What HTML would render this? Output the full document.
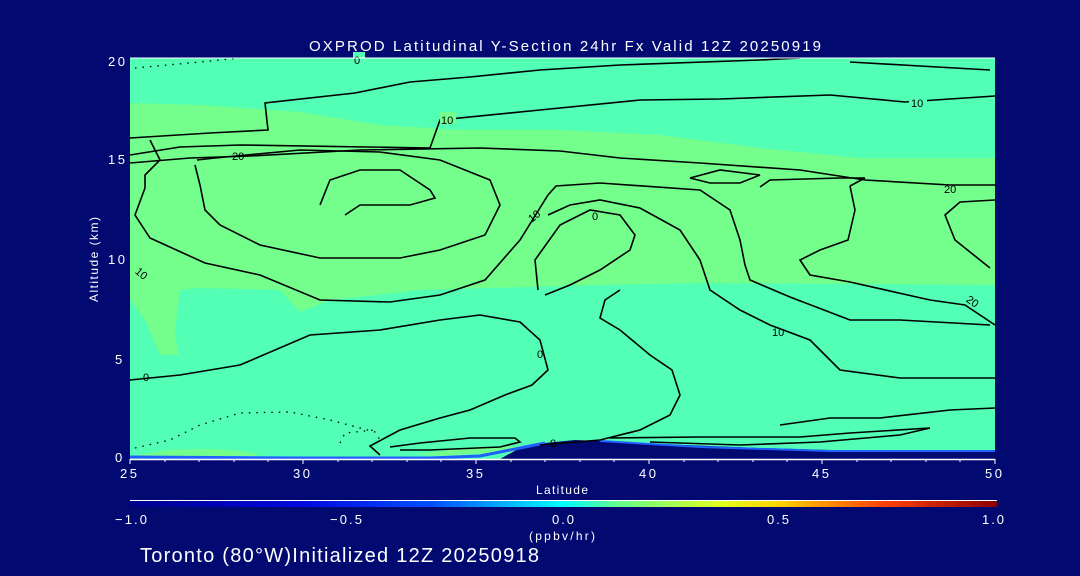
<!DOCTYPE html>
<html><head><style>
html,body{margin:0;padding:0;background:#020a72;width:1080px;height:576px;overflow:hidden}
svg{display:block}
text{font-family:"Liberation Sans",sans-serif;fill:#fff}
</style></head><body>
<svg width="1080" height="576" viewBox="0 0 1080 576">
<defs>
<linearGradient id="cb" x1="0" x2="1">
<stop offset="0" stop-color="#00008a"/>
<stop offset="0.2" stop-color="#0008e0"/>
<stop offset="0.35" stop-color="#0050ff"/>
<stop offset="0.5" stop-color="#00ffff"/>
<stop offset="0.56" stop-color="#60ff90"/>
<stop offset="0.68" stop-color="#e0ff20"/>
<stop offset="0.75" stop-color="#ffd000"/>
<stop offset="0.87" stop-color="#ff4000"/>
<stop offset="1" stop-color="#8a0000"/>
</linearGradient>
</defs>
<rect x="130" y="58" width="865" height="401" fill="#52ffb4"/>
<polygon fill="#74ff8c" points="130,103 200,105 300,112 380,125 460,130 560,130 660,135 760,148 860,158 995,158 995,285 700,283 600,285 420,290 330,300 300,312 280,290 200,288 180,290 175,330 178,355 160,355 145,320 130,300" />
<polygon fill="#74ff8c" points="130,456 170,450 210,449 250,452 260,456" />
<polygon fill="#74ff8c" points="415,454 470,448 520,446 515,452 440,456" />
<polygon fill="#020a72" points="500,459 520,448 545,443 575,440 600,441 660,444 760,448 830,450 900,450 995,450 995,459"/>
<polyline fill="none" stroke="#2060ff" stroke-width="3" points="130,457 300,458 430,458 480,456 520,448 545,443"/>
<polyline fill="none" stroke="#2060ff" stroke-width="2" points="600,441 700,447 830,451 995,451"/>
<g fill="none" stroke="#000" stroke-width="1.6">
<polyline points="130,138 210,133 268,130 265,103 355,93 410,82 470,77 540,70 620,65 760,60 800,58"/>
<polyline points="990,70 920,66 850,62"/>
<polyline points="130,155 180,147 240,145 430,148 440,120 540,110 640,100 720,99 830,95 905,102 995,96"/>
<polyline points="130,163 190,158 250,156 360,150 480,148 560,151 620,158 700,163 800,170 865,180 950,185 995,185"/>
<polyline points="150,140 160,160 145,175 145,188 135,215 150,238 205,263 260,275 320,300 390,302 440,295 485,280 520,240 548,195 556,186 600,183 700,190 730,210 740,240 745,265 750,280 790,297 850,320 900,320 990,325"/>
<polyline points="197,160 215,158 300,150 380,152 440,160 490,180 500,205 485,235 440,250 400,258 320,258 260,245 220,225 205,210 200,185 195,165"/>
<polyline points="320,205 330,180 360,170 400,170 430,190 435,198 410,205 360,205 345,215"/>
<polyline points="538,290 535,260 560,225 590,210 620,215 635,235 630,250 600,270 570,285 545,295"/>
<polyline points="548,215 570,205 600,200 640,208 680,230 700,260 710,290 740,310 770,325 810,340 840,370 900,378 995,378"/>
<polyline points="690,178 720,170 760,175 740,183 710,183 690,178"/>
<polyline points="995,200 960,202 945,215 955,240 990,268"/>
<polyline points="850,186 855,210 848,240 820,250 800,260 810,275 850,282 930,300 965,305 995,325"/>
<polyline points="760,187 770,180 840,178 865,178 850,186"/>
<polyline points="130,380 180,375 240,365 310,335 380,330 440,320 480,315 520,322 540,340 548,370 532,385 505,395 470,410 440,418 400,430 370,446 380,455"/>
<polyline points="390,447 420,443 470,438 515,438 520,442 500,447 430,450 400,450"/>
<polyline points="540,445 600,440 640,430 670,415 680,395 672,370 650,355 620,330 600,318 605,300 620,290"/>
<polyline points="610,438 700,437 800,437 850,433 930,428"/>
<polyline points="930,428 900,435 820,442 740,445 650,442"/>
<polyline points="780,425 830,418 880,418 950,410 995,408"/>
</g>
<g fill="none" stroke="#000" stroke-width="1.3" stroke-dasharray="1.5 6">
<polyline points="135,68 200,62 240,58"/>
<polyline points="135,448 170,440 200,425 240,413 290,412 330,420 375,432 380,440"/>
<polyline points="340,443 345,433 375,430"/>
</g>
<g font-size="11">
<rect x="353" y="52" width="12" height="12" fill="#52ffb4"/><text x="354" y="64" style="fill:#000">0</text>
<rect x="440" y="112" width="16" height="12" fill="#74ff8c"/><text x="441" y="124" style="fill:#000">10</text>
<rect x="909" y="96" width="18" height="12" fill="#52ffb4"/><text x="911" y="107" style="fill:#000">10</text>
<text x="232" y="160" style="fill:#000">20</text>
<text x="944" y="193" style="fill:#000">20</text>
<text x="528" y="220" style="fill:#000" transform="rotate(-40 534 216)">10</text>
<text x="592" y="220" style="fill:#000">0</text>
<text x="136" y="276" style="fill:#000" transform="rotate(40 140 272)">10</text>
<text x="966" y="305" style="fill:#000" transform="rotate(35 972 302)">20</text>
<text x="772" y="336" style="fill:#000">10</text>
<text x="537" y="358" style="fill:#000">0</text>
<text x="143" y="381" style="fill:#000">0</text>
<text x="550" y="447" style="fill:#000">0</text>
</g>
<line x1="130" y1="459.5" x2="995" y2="459.5" stroke="#fff" stroke-width="1.5"/>
<line x1="130" y1="58" x2="995" y2="58" stroke="#fff" stroke-width="1"/>
<g stroke="#fff" stroke-width="1">
<line x1="130" y1="459" x2="130" y2="464"/><line x1="165" y1="459" x2="165" y2="462"/><line x1="199" y1="459" x2="199" y2="462"/><line x1="234" y1="459" x2="234" y2="462"/><line x1="268" y1="459" x2="268" y2="462"/><line x1="303" y1="459" x2="303" y2="464"/><line x1="338" y1="459" x2="338" y2="462"/><line x1="372" y1="459" x2="372" y2="462"/><line x1="407" y1="459" x2="407" y2="462"/><line x1="441" y1="459" x2="441" y2="462"/><line x1="476" y1="459" x2="476" y2="464"/><line x1="511" y1="459" x2="511" y2="462"/><line x1="545" y1="459" x2="545" y2="462"/><line x1="580" y1="459" x2="580" y2="462"/><line x1="614" y1="459" x2="614" y2="462"/><line x1="649" y1="459" x2="649" y2="464"/><line x1="684" y1="459" x2="684" y2="462"/><line x1="718" y1="459" x2="718" y2="462"/><line x1="753" y1="459" x2="753" y2="462"/><line x1="787" y1="459" x2="787" y2="462"/><line x1="822" y1="459" x2="822" y2="464"/><line x1="857" y1="459" x2="857" y2="462"/><line x1="891" y1="459" x2="891" y2="462"/><line x1="926" y1="459" x2="926" y2="462"/><line x1="960" y1="459" x2="960" y2="462"/><line x1="995" y1="459" x2="995" y2="464"/>
</g>
<g font-size="13">
<text x="309" y="51" font-size="15" textLength="512" lengthAdjust="spacing">OXPROD Latitudinal Y-Section 24hr  Fx Valid 12Z 20250919</text>
<text x="108" y="66" textLength="17">20</text><text x="108" y="164" textLength="17">15</text><text x="108" y="264" textLength="17">10</text><text x="115" y="364">5</text><text x="115" y="462">0</text>
<text x="120" y="478" textLength="17">25</text><text x="293" y="478" textLength="17">30</text><text x="466" y="478" textLength="17">35</text><text x="639" y="478" textLength="17">40</text><text x="812" y="478" textLength="17">45</text><text x="985" y="478" textLength="17">50</text>
<text x="536" y="494" font-size="12" textLength="52">Latitude</text>
<text x="98" y="302" font-size="12" transform="rotate(-90 98 302)" textLength="85">Altitude (km)</text>
<text x="115" y="524" textLength="32">−1.0</text><text x="330" y="524" textLength="32">−0.5</text><text x="552" y="524" textLength="22">0.0</text><text x="767" y="524" textLength="22">0.5</text><text x="982" y="524" textLength="22">1.0</text>
<text x="529" y="540" font-size="12" textLength="66">(ppbv/hr)</text>
<text x="140" y="562" font-size="20" textLength="399" lengthAdjust="spacing">Toronto (80°W)Initialized 12Z 20250918</text>
</g>
<line x1="130" y1="500.5" x2="997" y2="500.5" stroke="#fff" stroke-width="1"/>
<rect x="130" y="501" width="867" height="6" fill="url(#cb)"/>
</svg>
</body></html>
